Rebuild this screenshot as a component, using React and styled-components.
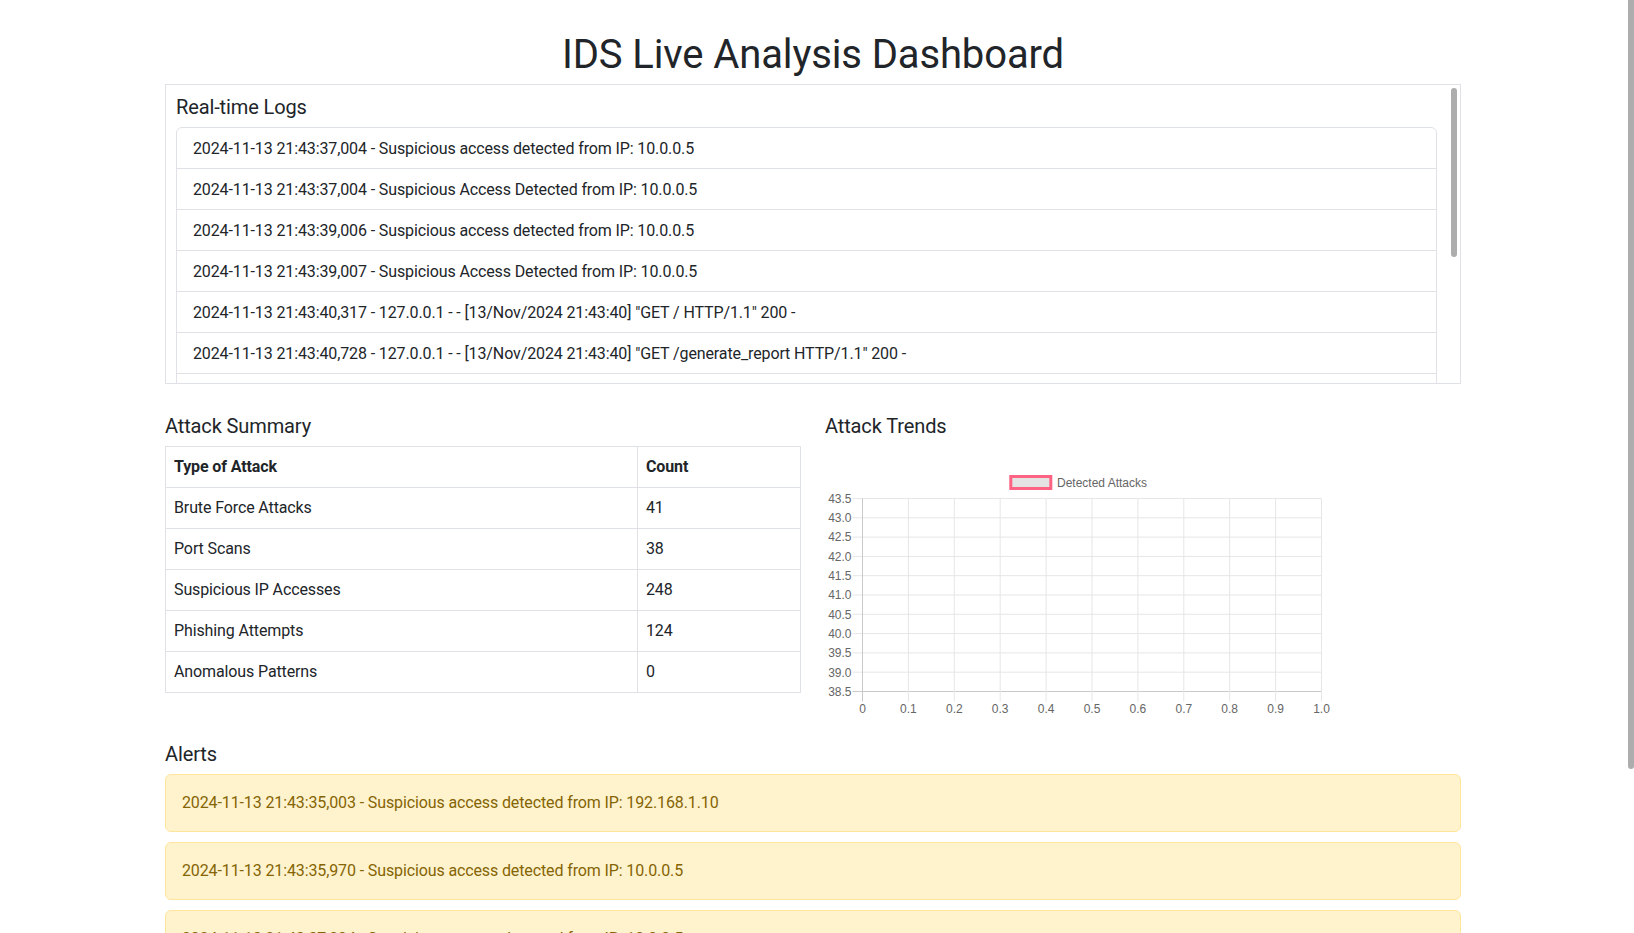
import React from "react";
import styled, { createGlobalStyle } from "styled-components";

const GlobalStyle = createGlobalStyle`
  *, *::before, *::after { box-sizing: border-box; }
  body {
    margin: 0;
    padding-right: 8px;
    background: #fff;
    color: #212529;
    font-family: Roboto, "Noto Sans", sans-serif;
    font-size: 16px;
    line-height: 1.5;
    letter-spacing: -0.0075em;
  }
`;

const PageThumb = styled.div`
  position: fixed;
  top: 0;
  right: 0;
  width: 6px;
  height: 769px;
  background: #adadad;
  border-radius: 0 0 3px 3px;
`;

const Container = styled.div`
  max-width: 1320px;
  margin: 0 auto;
  padding: 0 12px 18px;
`;

const Title = styled.h1`
  margin: 31px 0 5px;
  font-size: 40px;
  font-weight: 400;
  line-height: 1.2;
  text-align: center;
`;

const SectionTitle = styled.h5`
  margin: 0 0 8px;
  font-size: 20px;
  font-weight: 400;
  line-height: 1.2;
`;

const LogCard = styled.div`
  position: relative;
  height: 300px;
  border: 1px solid #dee2e6;
`;

const LogScroll = styled.div`
  height: 100%;
  overflow-y: auto;
  padding: 10px 23px 10px 10px;
  scrollbar-width: none;
  &::-webkit-scrollbar { display: none; }
`;

const CardThumb = styled.div`
  position: absolute;
  top: 3px;
  right: 3px;
  width: 6px;
  height: 169px;
  background: #adadad;
  border-radius: 3px;
`;

const ListGroup = styled.ul`
  list-style: none;
  margin: 0;
  padding: 0;
  border: 1px solid #dee2e6;
  border-radius: 6px;
`;

const ListItem = styled.li`
  padding: 9px 16px 7px;
  & + & { border-top: 1px solid #dee2e6; }
`;

const Row = styled.div`
  display: grid;
  grid-template-columns: 1fr 1fr;
  column-gap: 24px;
  margin-top: 30px;
`;

const Column = styled.section``;

const Table = styled.table`
  width: 100%;
  border-collapse: collapse;
  margin-bottom: 16px;
`;

const Cell = styled.td`
  padding: 8px;
  border: 1px solid #dee2e6;
  text-align: left;
  font-weight: ${(p) => (p.$head ? 700 : 400)};
  width: ${(p) => p.$width || "auto"};
`;

const ChartWrap = styled.div`
  margin-top: 26px;
  margin-bottom: 2px;
  width: 506px;
  height: 253px;
  letter-spacing: 0;
  svg { display: block; }
`;

const AlertsSection = styled.section`
  margin-top: 23px;
`;

const Alert = styled.div`
  padding: 16px;
  margin-bottom: 10px;
  background: #fff3cd;
  border: 1px solid #ffe69c;
  border-radius: 6px;
  color: #856404;
`;

const logs = [
  "2024-11-13 21:43:37,004 - Suspicious access detected from IP: 10.0.0.5",
  "2024-11-13 21:43:37,004 - Suspicious Access Detected from IP: 10.0.0.5",
  "2024-11-13 21:43:39,006 - Suspicious access detected from IP: 10.0.0.5",
  "2024-11-13 21:43:39,007 - Suspicious Access Detected from IP: 10.0.0.5",
  '2024-11-13 21:43:40,317 - 127.0.0.1 - - [13/Nov/2024 21:43:40] "GET / HTTP/1.1" 200 -',
  '2024-11-13 21:43:40,728 - 127.0.0.1 - - [13/Nov/2024 21:43:40] "GET /generate_report HTTP/1.1" 200 -',
  "2024-11-13 21:43:41,009 - Suspicious access detected from IP: 192.168.1.10",
  "2024-11-13 21:43:41,010 - Suspicious Access Detected from IP: 192.168.1.10",
  "2024-11-13 21:43:43,012 - Suspicious access detected from IP: 10.0.0.5",
  "2024-11-13 21:43:43,013 - Suspicious Access Detected from IP: 10.0.0.5",
  '2024-11-13 21:43:45,730 - 127.0.0.1 - - [13/Nov/2024 21:43:45] "GET /generate_report HTTP/1.1" 200 -',
];

const summary = [
  ["Brute Force Attacks", 41],
  ["Port Scans", 38],
  ["Suspicious IP Accesses", 248],
  ["Phishing Attempts", 124],
  ["Anomalous Patterns", 0],
];

const alerts = [
  "2024-11-13 21:43:35,003 - Suspicious access detected from IP: 192.168.1.10",
  "2024-11-13 21:43:35,970 - Suspicious access detected from IP: 10.0.0.5",
  "2024-11-13 21:43:37,004 - Suspicious access detected from IP: 10.0.0.5",
  "2024-11-13 21:43:39,006 - Suspicious access detected from IP: 10.0.0.5",
  "2024-11-13 21:43:41,009 - Suspicious access detected from IP: 192.168.1.10",
];

function TrendChart() {
  const L = 37.5, R = 496.5, T = 34.5, B = 227.5;
  const yLabels = ["43.5", "43.0", "42.5", "42.0", "41.5", "41.0", "40.5", "40.0", "39.5", "39.0", "38.5"];
  const xLabels = ["0", "0.1", "0.2", "0.3", "0.4", "0.5", "0.6", "0.7", "0.8", "0.9", "1.0"];
  const ys = (B - T) / 10;
  const xs = (R - L) / 10;
  const font = { fontFamily: '"Liberation Sans", Arial, sans-serif', fontSize: 12, fill: "#666" };
  return (
    <svg width="506" height="253" viewBox="0 0 506 253">
      <rect x="185.8" y="12.5" width="40" height="12" fill="#e4e4e4" stroke="#ff6384" strokeWidth="3" />
      <text x="232" y="23" {...font}>Detected Attacks</text>
      {yLabels.map((lab, i) => {
        const y = T + i * ys;
        return (
          <g key={lab}>
            <line x1={L - 10} x2={R} y1={y} y2={y} stroke={i === 10 ? "#c9c9c9" : "#e6e6e6"} strokeWidth="1" />
            <text x="26.5" y={y + 4.3} textAnchor="end" {...font}>{lab}</text>
          </g>
        );
      })}
      {xLabels.map((lab, i) => {
        const x = L + i * xs;
        return (
          <g key={lab}>
            <line x1={x} x2={x} y1={T} y2={B + 10} stroke={i === 0 ? "#c9c9c9" : "#e6e6e6"} strokeWidth="1" />
            <text x={x} y="249" textAnchor="middle" {...font}>{lab}</text>
          </g>
        );
      })}
    </svg>
  );
}

export default function App() {
  return (
    <>
      <GlobalStyle />
      <PageThumb />
      <Container>
        <Title>IDS Live Analysis Dashboard</Title>
        <LogCard>
          <LogScroll>
            <SectionTitle>Real-time Logs</SectionTitle>
            <ListGroup>
              {logs.map((l, i) => (
                <ListItem key={i}>{l}</ListItem>
              ))}
            </ListGroup>
          </LogScroll>
          <CardThumb />
        </LogCard>
        <Row>
          <Column>
            <SectionTitle>Attack Summary</SectionTitle>
            <Table>
              <thead>
                <tr>
                  <Cell as="th" $head $width="472px">Type of Attack</Cell>
                  <Cell as="th" $head>Count</Cell>
                </tr>
              </thead>
              <tbody>
                {summary.map(([name, count]) => (
                  <tr key={name}>
                    <Cell>{name}</Cell>
                    <Cell>{count}</Cell>
                  </tr>
                ))}
              </tbody>
            </Table>
          </Column>
          <Column>
            <SectionTitle>Attack Trends</SectionTitle>
            <ChartWrap>
              <TrendChart />
            </ChartWrap>
          </Column>
        </Row>
        <AlertsSection>
          <SectionTitle>Alerts</SectionTitle>
          {alerts.map((a, i) => (
            <Alert key={i}>{a}</Alert>
          ))}
        </AlertsSection>
      </Container>
    </>
  );
}
